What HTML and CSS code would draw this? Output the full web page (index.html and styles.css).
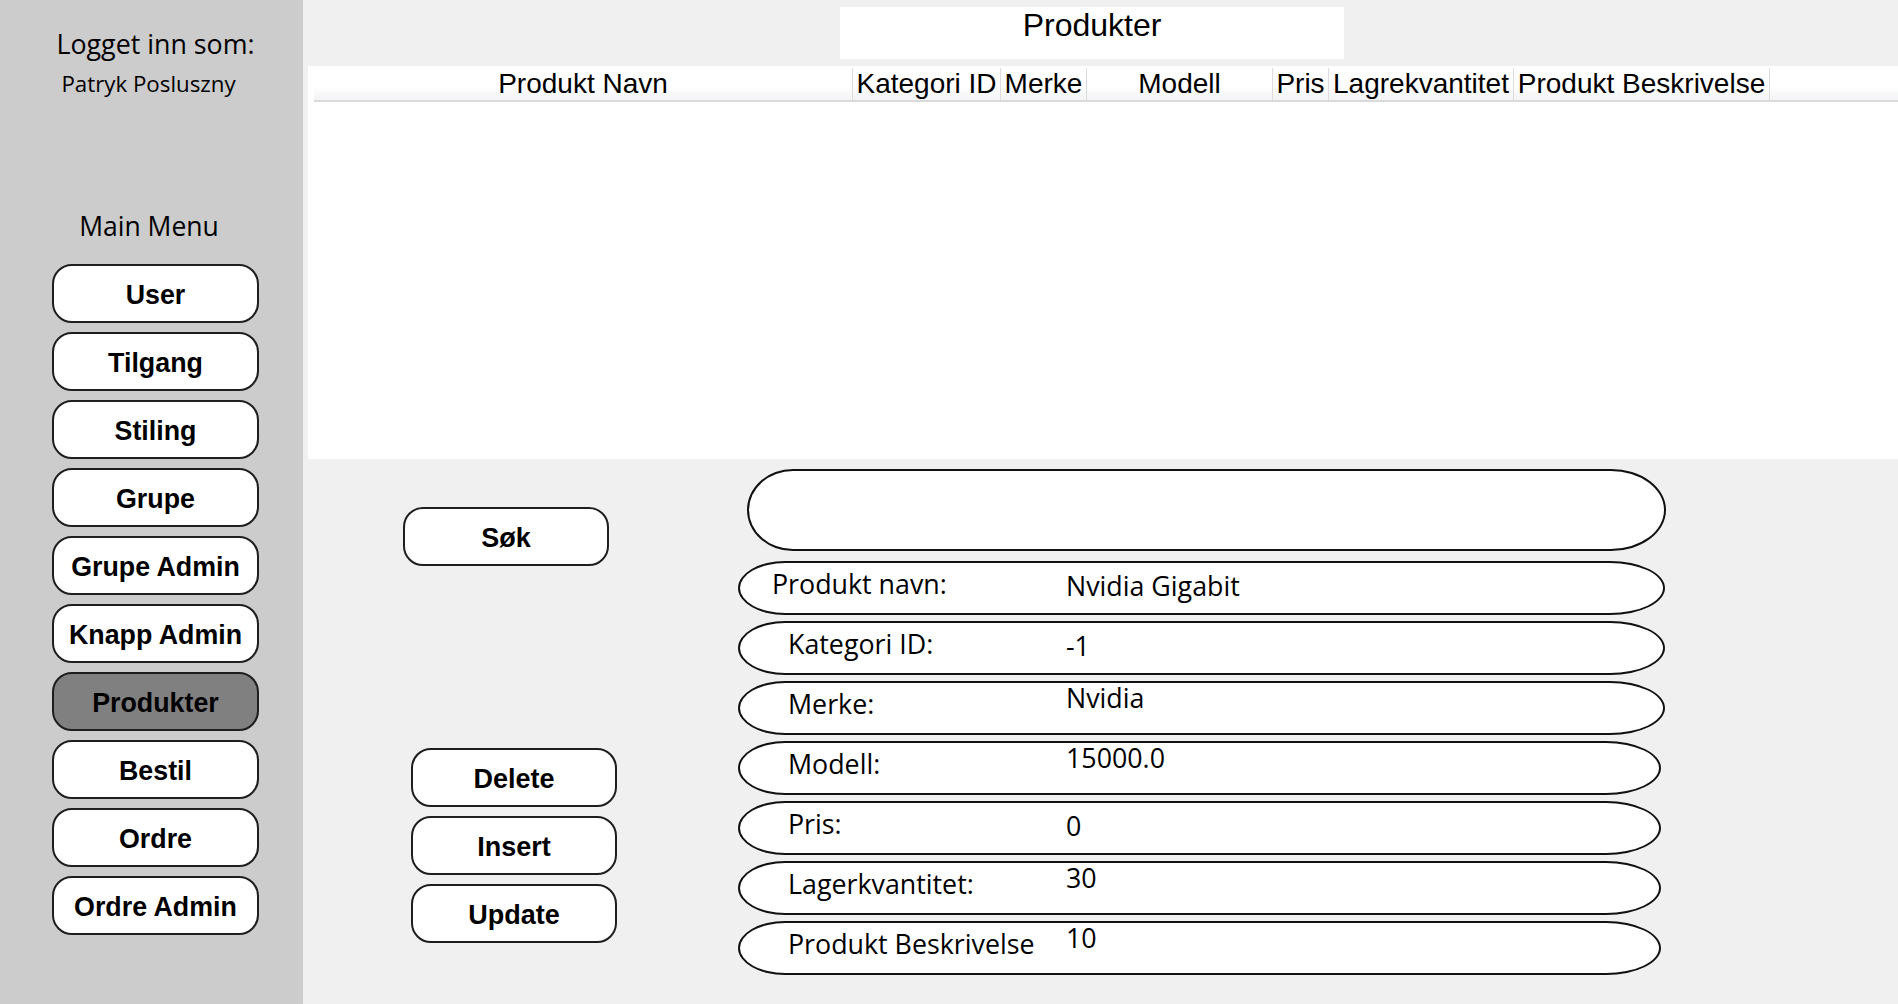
FILE: index.html
```html
<!DOCTYPE html>
<html lang="no">
<head>
<meta charset="utf-8">
<title>Produkter</title>
<link rel="stylesheet" href="styles.css">
</head>
<body>
<div class="app">
  <aside class="sidebar">
    <div class="login-label">Logget inn som:</div>
    <div class="login-name">Patryk Posluszny</div>
    <div class="menu-title">Main Menu</div>
    <nav class="menu">
      <button class="btn">User</button>
      <button class="btn">Tilgang</button>
      <button class="btn">Stiling</button>
      <button class="btn">Grupe</button>
      <button class="btn">Grupe Admin</button>
      <button class="btn">Knapp Admin</button>
      <button class="btn btn--active">Produkter</button>
      <button class="btn">Bestil</button>
      <button class="btn">Ordre</button>
      <button class="btn">Ordre Admin</button>
    </nav>
  </aside>
  <main class="main">
    <div class="titlebar"><div class="title">Produkter</div></div>
    <div class="grid">
      <div class="grid-head">
        <div class="col col-1">Produkt Navn</div>
        <div class="col col-2">Kategori ID</div>
        <div class="col col-3">Merke</div>
        <div class="col col-4">Modell</div>
        <div class="col col-5">Pris</div>
        <div class="col col-6">Lagrekvantitet</div>
        <div class="col col-7">Produkt Beskrivelse</div>
        <div class="col-fill"></div>
      </div>
    </div>
    <div class="editor">
      <div class="actions">
        <button class="btn btn--action">Søk</button>
        <div class="crud">
          <button class="btn btn--action">Delete</button>
          <button class="btn btn--action">Insert</button>
          <button class="btn btn--action">Update</button>
        </div>
      </div>
      <div class="fields">
        <div class="search-field"></div>
        <div class="field"><span class="field-label field-label--first">Produkt navn:</span><span class="field-value">Nvidia Gigabit</span></div>
        <div class="field"><span class="field-label">Kategori ID:</span><span class="field-value">-1</span></div>
        <div class="field"><span class="field-label">Merke:</span><span class="field-value field-value--high">Nvidia</span></div>
        <div class="field field--narrow"><span class="field-label">Modell:</span><span class="field-value field-value--high">15000.0</span></div>
        <div class="field field--narrow"><span class="field-label">Pris:</span><span class="field-value">0</span></div>
        <div class="field field--narrow"><span class="field-label">Lagerkvantitet:</span><span class="field-value field-value--high">30</span></div>
        <div class="field field--narrow"><span class="field-label">Produkt Beskrivelse</span><span class="field-value field-value--high">10</span></div>
      </div>
    </div>
  </main>
</div>
</body>
</html>
```
FILE: styles.css
```css
html, body {
  margin: 0;
  padding: 0;
}
body {
  width: 1898px;
  height: 1004px;
  overflow: hidden;
  background: #f0f0f0;
  color: #000;
  font-family: "Liberation Sans", Arial, sans-serif;
}
.app {
  display: flex;
  height: 1004px;
}

/* ---------- sidebar ---------- */
.sidebar {
  width: 303px;
  flex: none;
  box-sizing: border-box;
  background: #cccccc;
  padding: 28px 44px 0 52px;
  display: flex;
  flex-direction: column;
}
.login-label {
  font-family: "Open Sans", sans-serif;
  font-size: 26.8px;
  line-height: 32px;
  text-align: center;
  white-space: nowrap;
}
.login-name {
  font-family: "Open Sans", sans-serif;
  font-size: 22.3px;
  line-height: 26px;
  margin: 11px 0 0 -14px;
  text-align: center;
  white-space: nowrap;
}
.menu-title {
  font-family: "Open Sans", sans-serif;
  font-size: 26.5px;
  line-height: 32px;
  margin: 113px 0 0 -13px;
  text-align: center;
  white-space: nowrap;
}
.menu {
  margin-top: 22px;
  display: flex;
  flex-direction: column;
  gap: 9px;
}

/* ---------- buttons ---------- */
.btn {
  display: block;
  width: 207px;
  height: 59px;
  box-sizing: border-box;
  margin: 0;
  padding: 3px 0 0;
  background: #ffffff;
  border: 2px solid #1e1e1e;
  border-radius: 20px;
  font-family: "Liberation Sans", Arial, sans-serif;
  font-weight: bold;
  font-size: 26.8px;
  line-height: 52px;
  color: #000;
  text-align: center;
  white-space: nowrap;
}
.btn--active {
  background: #808080;
}
.btn--action {
  width: 206px;
  font-size: 27px;
}

/* ---------- main ---------- */
.main {
  flex: 1;
  display: flex;
  flex-direction: column;
  min-width: 0;
}
.titlebar {
  padding: 7px 0 0 537px;
}
.title {
  width: 504px;
  height: 52px;
  background: #ffffff;
  font-size: 32px;
  line-height: 36px;
  text-align: center;
}
.grid {
  margin: 7px 0 0 5px;
  height: 393px;
  box-sizing: border-box;
  background: #ffffff;
  padding: 2px 0 0 6px;
}
.grid-head {
  display: flex;
  height: 34px;
  box-sizing: border-box;
  background: linear-gradient(#ffffff 0%, #ffffff 55%, #f2f3f5 100%);
  border-bottom: 2px solid #dadada;
}
.col {
  flex: none;
  box-sizing: border-box;
  border-right: 1px solid #dcdcdc;
  font-size: 28px;
  line-height: 31px;
  text-align: center;
  white-space: nowrap;
  overflow: visible;
  display: flex;
  justify-content: center;
}
.col-1 { width: 539px; }
.col-2 { width: 148px; }
.col-3 { width: 86px; }
.col-4 { width: 186px; }
.col-5 { width: 56px; }
.col-6 { width: 185px; }
.col-7 { width: 256px; }
.col-fill { flex: 1; }

/* ---------- editor ---------- */
.editor {
  flex: 1;
  display: flex;
}
.actions {
  width: 435px;
  flex: none;
  box-sizing: border-box;
  padding: 48px 0 0 100px;
}
.crud {
  margin: 182px 0 0 8px;
  display: flex;
  flex-direction: column;
  gap: 9px;
}
.fields {
  padding-top: 10px;
  display: flex;
  flex-direction: column;
  gap: 6px;
}
.search-field {
  width: 919px;
  height: 82px;
  margin: 0 0 4px 9px;
  box-sizing: border-box;
  background: #ffffff;
  border: 2px solid #111;
  border-radius: 46px 55px 55px 46px / 41px;
}
.field {
  width: 927px;
  height: 54px;
  box-sizing: border-box;
  background: #ffffff;
  border: 2px solid #111;
  border-radius: 47px 55px 55px 47px / 27px;
  display: flex;
  align-items: center;
  font-family: "Open Sans", sans-serif;
  font-size: 26.8px;
}
.field--narrow {
  width: 923px;
}
.field-label {
  flex: none;
  width: 326px;
  box-sizing: border-box;
  padding: 0 0 8px 48px;
  line-height: 32px;
  white-space: nowrap;
}
.field-label--first {
  padding-left: 32px;
}
.field-value {
  line-height: 30px;
  padding-bottom: 4px;
  white-space: nowrap;
}
.field-value--high {
  padding-bottom: 20px;
}
```
